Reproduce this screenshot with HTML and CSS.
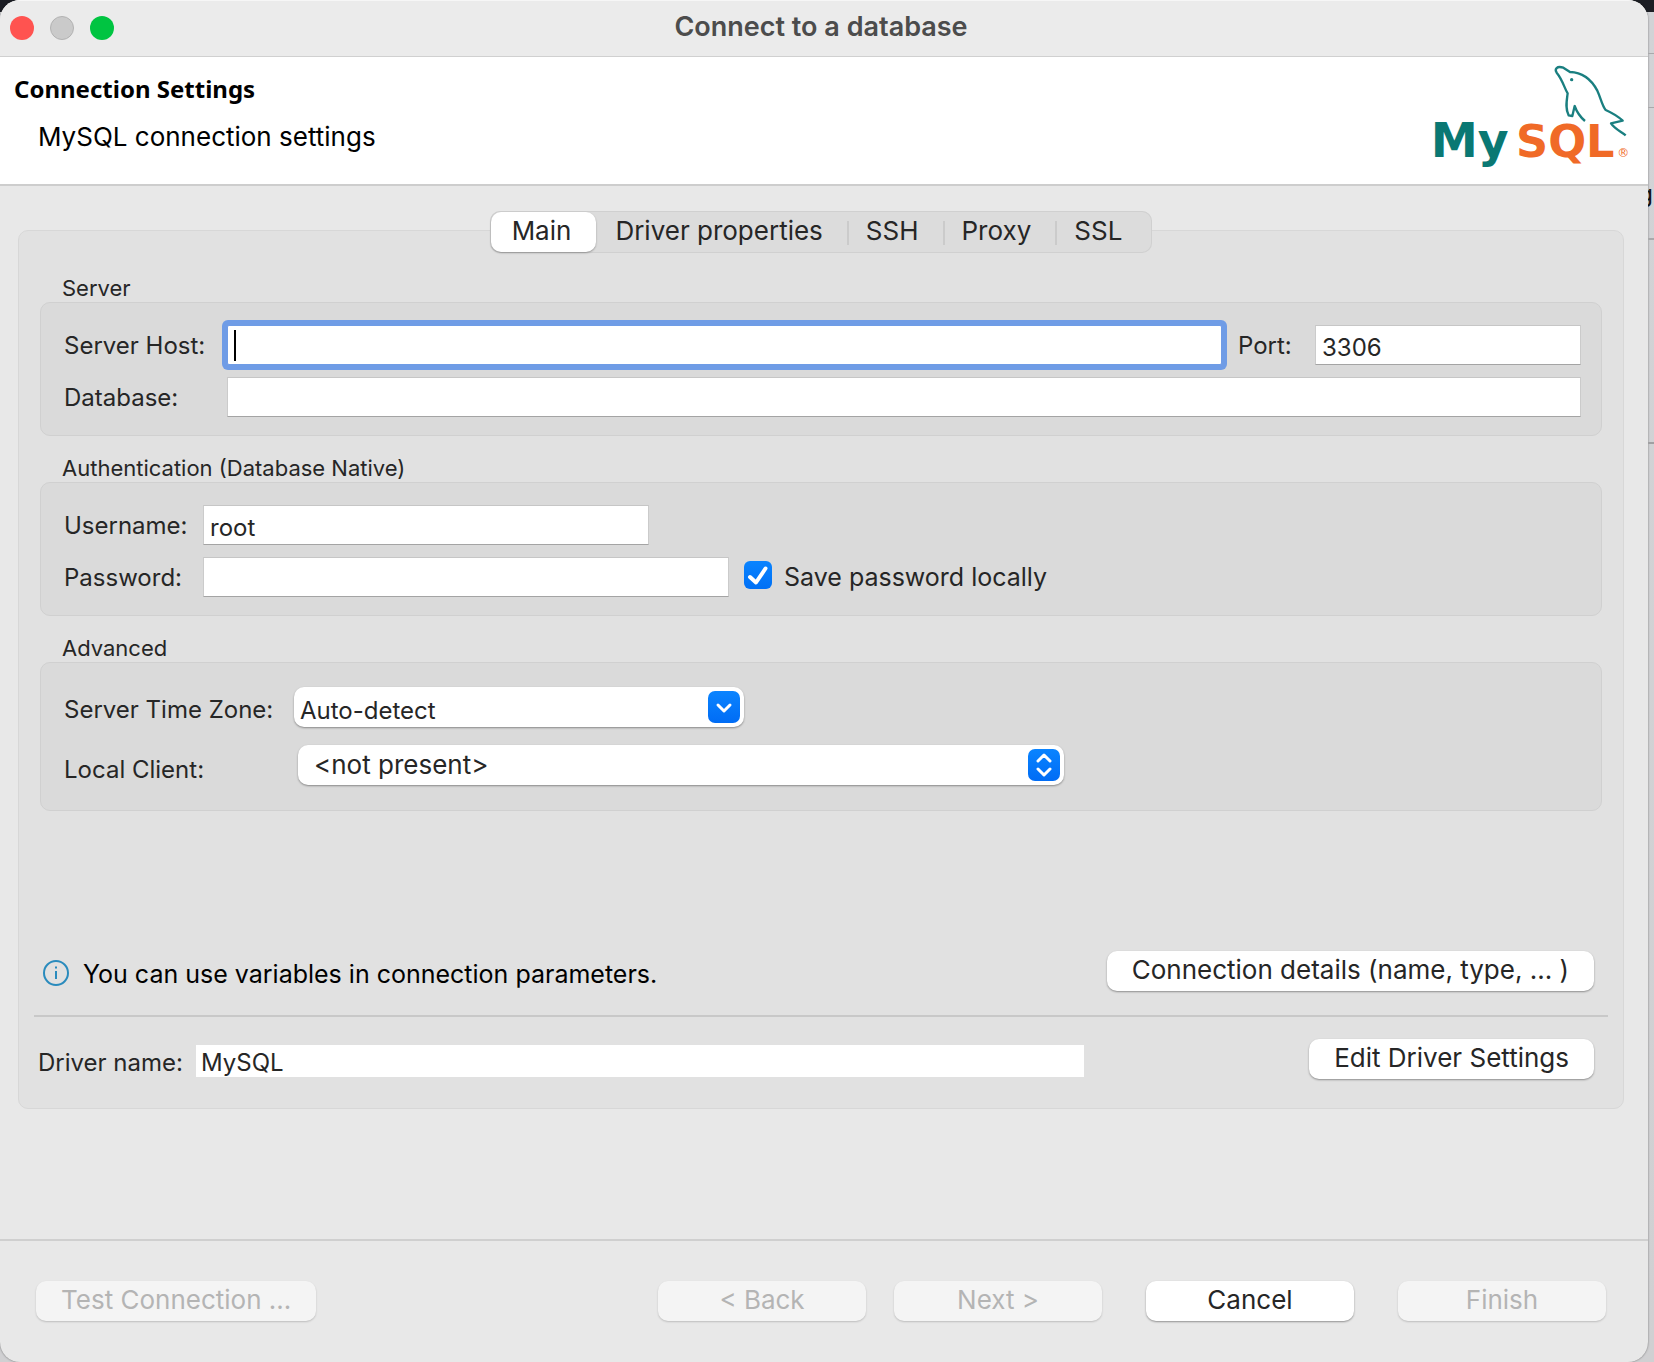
FILE: index.html
```html
<!DOCTYPE html>
<html lang="en">
<head>
<meta charset="utf-8">
<title>Connect to a database</title>
<link rel="stylesheet" href="styles.css">
</head>
<body>
<div class="desktop">
<main class="dialog">
  <header class="titlebar">
    <div class="lights">
      <button class="light light-close" type="button" aria-label="Close"></button>
      <button class="light light-min" type="button" aria-label="Minimize" disabled></button>
      <button class="light light-zoom" type="button" aria-label="Zoom"></button>
    </div>
    <h1 class="title">Connect to a database</h1>
  </header>

  <section class="banner">
    <div>
      <h2 class="banner-title">Connection Settings</h2>
      <p class="banner-text">MySQL connection settings</p>
    </div>
    <svg class="logo" viewBox="90 60 600 330" role="img" aria-label="MySQL">
      <path class="dolphin" d="M555 243 C542 232 530 215 524 198 L517 228 L506 226 C495 207 500 182 503 160 C493 145 489 121 470 98 C463 87 470 77 490 83 L510 96 C550 97 576 122 592 152 C602 173 606 197 617 210 C635 218 655 230 668 242 L633 250 C645 268 665 275 677 286"/>
      <circle class="eye" cx="515" cy="119" r="5"/>
      <text class="logo-my" x="92" y="351">My</text>
      <text class="logo-sql" x="348" y="351">SQL</text>
      <text class="logo-reg" x="652" y="351">®</text>
    </svg>
  </section>

  <form class="content">
    <nav class="tabs" role="tablist">
      <button class="tab tab-active" type="button" role="tab" aria-selected="true">Main</button>
      <button class="tab" type="button" role="tab">Driver properties</button>
      <button class="tab tab-split" type="button" role="tab">SSH</button>
      <button class="tab tab-split" type="button" role="tab">Proxy</button>
      <button class="tab tab-split" type="button" role="tab">SSL</button>
    </nav>

    <div class="panel">
      <h3 class="group-title">Server</h3>
      <div class="group">
        <div class="row">
          <label class="label label-server" for="host">Server Host:</label>
          <input class="field field-focus grow" id="host" type="text">
          <label class="label label-port" for="port">Port:</label>
          <input class="field field-port" id="port" type="text" value="3306">
        </div>
        <div class="row">
          <label class="label label-server" for="database">Database:</label>
          <input class="field grow" id="database" type="text">
        </div>
      </div>

      <h3 class="group-title">Authentication (Database Native)</h3>
      <div class="group">
        <div class="row">
          <label class="label label-auth" for="user">Username:</label>
          <input class="field field-user" id="user" type="text" value="root">
        </div>
        <div class="row">
          <label class="label label-auth" for="password">Password:</label>
          <input class="field field-password" id="password" type="password">
          <span class="check">
            <input class="check-box" id="save" type="checkbox" checked>
            <svg class="check-mark" viewBox="0 0 28 28" aria-hidden="true"><path d="M6 16 L12 21.500 L21.500 7.500"/></svg>
          </span>
          <label class="check-label" for="save">Save password locally</label>
        </div>
      </div>

      <h3 class="group-title">Advanced</h3>
      <div class="group group-advanced">
        <div class="row">
          <label class="label label-zone" for="zone">Server Time Zone:</label>
          <span class="picker picker-zone">
            <select class="select select-zone" id="zone"><option>Auto-detect</option></select>
            <svg class="arrow" viewBox="0 0 32 32" aria-hidden="true"><path d="M10 14 L16 20 L22 14"/></svg>
          </span>
        </div>
        <div class="row">
          <label class="label label-client" for="client">Local Client:</label>
          <span class="picker picker-client">
            <select class="select select-client" id="client"><option>&lt;not present&gt;</option></select>
            <svg class="arrow" viewBox="0 0 32 32" aria-hidden="true"><path d="M10 12 L16 6 L22 12 M10 20 L16 26 L22 20"/></svg>
          </span>
        </div>
      </div>

      <div class="hint">
        <svg class="info" viewBox="0 0 26 26" aria-hidden="true"><circle cx="13" cy="13" r="12"/><path d="M13 11 V19 M13 6.500 V8.500"/></svg>
        <p class="hint-text">You can use variables in connection parameters.</p>
        <button class="button" type="button">Connection details (name, type, ... )</button>
      </div>
      <hr class="rule">
      <div class="driver">
        <label class="label label-driver" for="driver">Driver name:</label>
        <input class="driver-field" id="driver" type="text" value="MySQL" readonly>
        <button class="button" type="button">Edit Driver Settings</button>
      </div>
    </div>
  </form>

  <footer class="footer">
    <button class="button button-test" type="button" disabled>Test Connection ...</button>
    <div class="steps">
      <button class="button button-step" type="button" disabled>&lt; Back</button>
      <button class="button button-step" type="button" disabled>Next &gt;</button>
    </div>
    <button class="button button-step" type="button">Cancel</button>
    <button class="button button-step" type="button" disabled>Finish</button>
  </footer>
</main>
<aside class="behind" aria-hidden="true"><span class="behind-text">g</span></aside>
</div>
</body>
</html>
```
FILE: styles.css
```css
* { box-sizing: border-box; }

body {
  margin: 0;
  font-family: Inter, "Liberation Sans", sans-serif;
  font-size: 24px;
  color: #262626;
  background: linear-gradient(#1c1e24 0 12px, #d2d3d6 12px, #d0d0d2 100%);
}

h1, h2, h3, p { margin: 0; font-weight: 400; }
button, input, select { font: inherit; color: inherit; margin: 0; border: 0; }

.desktop { display: flex; min-height: 100vh; }

.dialog {
  flex: 1;
  display: flex;
  flex-direction: column;
  background: #e8e8e8;
  border-radius: 20px;
  overflow: hidden;
  box-shadow: 0 0 2px #00000080;
}

.titlebar {
  display: grid;
  grid-template-columns: 1fr auto 1fr;
  align-items: center;
  height: 57px;
  padding: 0 16px 0 10px;
  background: #ebebeb;
  border-bottom: 1px solid #d0d0d0;
  box-shadow: inset 0 1px #f6f6f6;
}
.lights { display: flex; gap: 16px; }
.light { width: 24px; height: 24px; padding: 0; border-radius: 50%; }
.light-close { background: #ff5350; }
.light-min { background: #cacaca; border: 1px solid #b2b2b2; }
.light-zoom { background: #00c441; }
.title { font-size: 27px; font-weight: 600; line-height: 30px; color: #4c4c4c; padding-bottom: 2px; }

.banner {
  display: flex;
  justify-content: space-between;
  height: 129px;
  padding: 3px 18px 0 14px;
  background: #fff;
  border-bottom: 2px solid #cdcdcd;
  color: #000;
}
.banner-title { font: 700 24px/32px "Noto Sans", sans-serif; padding-top: 13px; }
.banner-text { font-size: 26px; line-height: 32px; padding: 16px 0 0 24px; }
.logo { width: 200px; height: 110px; }
.dolphin { fill: none; stroke: #1a7f80; stroke-width: 7; stroke-linejoin: round; }
.eye { fill: #1a7f80; }
.logo-my, .logo-sql { font: 700 134px "DejaVu Sans", sans-serif; }
.logo-my { font-size: 142px; fill: #0a7873; }
.logo-sql { fill: #f06a27; }
.logo-reg { font: 36px "DejaVu Sans", sans-serif; fill: #f06a27; }

.content { flex: 1; display: flex; flex-direction: column; padding: 25px 24px 0 18px; }

.tabs {
  display: flex;
  align-self: center;
  z-index: 1;
  height: 42px;
  margin-bottom: -23px;
  padding: 1px;
  background: #dcdcdc;
  border-radius: 10px;
  box-shadow: inset 0 0 0 1px #d0d0d0;
}
.tab { position: relative; padding: 0 24px 3px 19px; background: none; font-size: 26px; }
.tab:last-child { padding-right: 29px; }
.tab-active { padding: 0 25px 3px 21px; background: #fff; border-radius: 10px; box-shadow: 0 1px 2px #00000050; }
.tab-split::before { content: ""; position: absolute; left: 0; top: 9px; width: 2px; height: 24px; background: #cbcbcb; }

.panel {
  display: flex;
  flex-direction: column;
  min-height: 879px;
  padding: 43px 21px 29px;
  background: #e1e1e1;
  border: 1px solid #d7d7d7;
  border-radius: 10px;
}
.group-title { font-size: 22px; line-height: 28px; padding-left: 22px; }
.group {
  display: flex;
  flex-direction: column;
  gap: 12px;
  margin-bottom: 18px;
  padding: 22px 20px 18px 23px;
  background: #dadada;
  border: 1px solid #d0d0d0;
  border-radius: 10px;
}
.group-advanced { gap: 18px; padding-top: 24px; padding-bottom: 25px; }
.row { display: flex; align-items: center; }
.grow { flex: 1; min-width: 0; }

.label { white-space: nowrap; flex: none; }
.label-server { width: 163px; }
.label-port { width: 93px; padding-left: 16px; }
.label-auth { width: 139px; }
.label-zone { width: 230px; padding-top: 4px; }
.label-client { width: 234px; padding-top: 8px; }
.label-driver { width: 158px; padding-top: 6px; }

.field {
  height: 40px;
  padding: 4px 6px 0;
  background: #fff;
  border: 1px solid #cbcbcb;
  border-top-color: #c6c6c6;
  border-bottom-color: #a4a4a4;
  outline: none;
}
.field-focus {
  border-color: #6f9ce6;
  border-radius: 2px;
  box-shadow: 0 0 0 5px #6f9ce6;
  background: linear-gradient(#000, #000) 6px 4px / 2px 31px no-repeat #fff;
}
.field-port { width: 266px; }
.field-user { width: 446px; }
.field-password { width: 526px; }

.check { position: relative; width: 28px; height: 28px; margin: -4px 12px 0 15px; }
.check-box { appearance: none; width: 28px; height: 28px; background: linear-gradient(#0a84ff, #0070f5); border-radius: 6px; }
.check-mark { position: absolute; inset: 0; pointer-events: none; }
.check-mark path { stroke-width: 4; }
.check-mark path, .arrow path { fill: none; stroke: #fff; stroke-linecap: round; stroke-linejoin: round; }
.arrow path { stroke-width: 3; }
.check-label { font-size: 25px; }

.picker { position: relative; height: 40px; }
.picker-zone { width: 450px; }
.picker-client { width: 766px; }
.select {
  appearance: none;
  width: 100%;
  height: 40px;
  background: #fff;
  border-radius: 10px;
  box-shadow: 0 1px 2px #00000060;
}
.select-zone { padding: 6px 44px 0 6px; }
.select-client { padding: 0 44px 2px 16px; font-size: 26px; }
.arrow {
  position: absolute;
  right: 4px;
  top: 4px;
  width: 32px;
  height: 32px;
  border-radius: 7px;
  background: linear-gradient(#0a84ff, #006cf5);
  pointer-events: none;
}

.hint { display: flex; align-items: center; margin-top: auto; padding: 0 8px 0 3px; }
.info { width: 26px; height: 26px; margin-top: 4px; fill: none; stroke: #2a8bbd; stroke-width: 2; }
.hint-text { flex: 1; font-size: 25px; color: #000; padding: 6px 0 0 14px; }

.rule { align-self: stretch; height: 2px; margin: 24px -6px 22px; border: 0; background: #c8c8c8; }

.driver { display: flex; align-items: center; padding-right: 8px; margin-left: -2px; }
.driver-field { width: 888px; height: 32px; margin: 4px auto 0 0; padding: 2px 5px 0; background: #fff; outline: none; }

.button {
  height: 40px;
  padding: 0 25px 3px;
  background: #fff;
  border-radius: 10px;
  box-shadow: 0 1px 2px #00000060;
  font-size: 26px;
  white-space: nowrap;
}
.button:disabled { background: #f4f4f4; color: #b4b4b4; box-shadow: 0 1px 2px #00000030; }

.footer { display: flex; gap: 44px; padding: 40px 42px 41px 36px; border-top: 2px solid #cfcfcf; }
.button-test { width: 280px; margin-right: auto; }
.button-step { width: 208px; padding-left: 0; padding-right: 0; }
.steps { display: flex; gap: 28px; }

.behind {
  width: 6px;
  overflow: hidden;
  background: linear-gradient(#a9a9ab, #a9a9ab) 0 53px / 6px 1px no-repeat,
    linear-gradient(#a9a9ab, #a9a9ab) 0 107px / 6px 1px no-repeat,
    linear-gradient(#a9a9ab, #a9a9ab) 0 238px / 6px 2px no-repeat,
    linear-gradient(#a0a0a2, #a0a0a2) 0 442px / 6px 2px no-repeat;
}
.behind-text { display: flex; justify-content: flex-end; padding: 180px 1px 0 0; font-size: 24px; line-height: 28px; color: #111; }
```
